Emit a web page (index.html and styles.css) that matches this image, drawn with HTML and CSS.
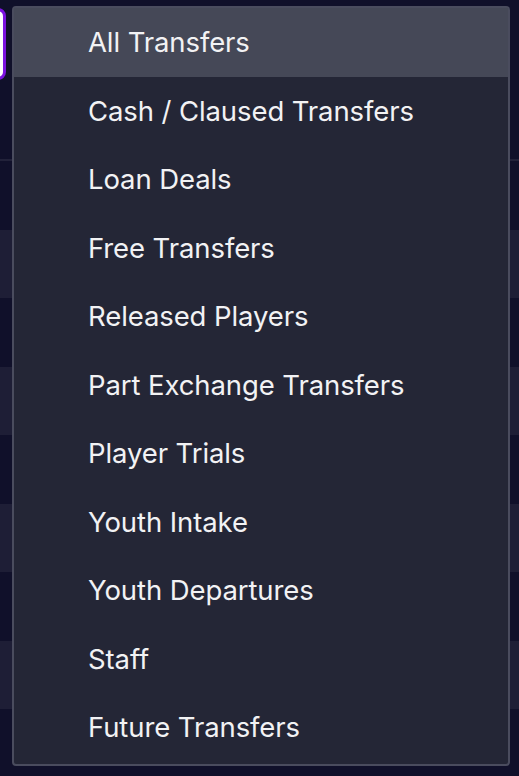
FILE: index.html
```html
<!DOCTYPE html>
<html lang="en">
<head>
  <meta charset="UTF-8">
  <title>Transfers</title>
  <link rel="stylesheet" href="styles.css">
</head>
<body>
<div class="page">
  <div class="header">
    <div class="filter-select"></div>
  </div>
  <div class="rows">
    <div class="row"></div>
    <div class="row alt"></div>
    <div class="row"></div>
    <div class="row alt"></div>
    <div class="row"></div>
    <div class="row alt"></div>
    <div class="row"></div>
    <div class="row alt"></div>
    <div class="row"></div>
  </div>

  <ul class="dropdown">
    <li class="option active">All Transfers</li>
    <li class="option">Cash / Claused Transfers</li>
    <li class="option">Loan Deals</li>
    <li class="option">Free Transfers</li>
    <li class="option">Released Players</li>
    <li class="option">Part Exchange Transfers</li>
    <li class="option">Player Trials</li>
    <li class="option">Youth Intake</li>
    <li class="option">Youth Departures</li>
    <li class="option">Staff</li>
    <li class="option">Future Transfers</li>
  </ul>
</div>
</body>
</html>
```

FILE: styles.css
```css
body {
  margin: 0;
  background: #10102a;
  font-family: Inter, "Noto Sans", sans-serif;
  overflow: hidden;
}
.page {
  position: relative;
  height: 776px;
}
.header {
  height: 161px;
  border-bottom: 2px solid #22223a;
  padding-top: 8px;
  box-sizing: border-box;
}
.filter-select {
  margin-left: -100px;
  width: 100px;
  height: 66px;
  background: #fff;
  border: 3px solid #7b12e0;
  border-radius: 8px;
}
.row {
  height: 68.5px;
  background: #10102a;
}
.row.alt {
  background: #1e1e36;
}
.dropdown {
  position: absolute;
  top: 6px;
  left: 12px;
  width: 498px;
  box-sizing: border-box;
  margin: 0;
  padding: 0 0 2px;
  list-style: none;
  background: #242636;
  border: 2px solid #4a4c5e;
  border-radius: 4px;
}
.option {
  height: 68.5px;
  display: flex;
  align-items: center;
  padding-left: 74px;
  font-size: 27.5px;
  letter-spacing: -0.1px;
  color: #f2f2f4;
}
.option.active {
  background: #454857;
}
```
